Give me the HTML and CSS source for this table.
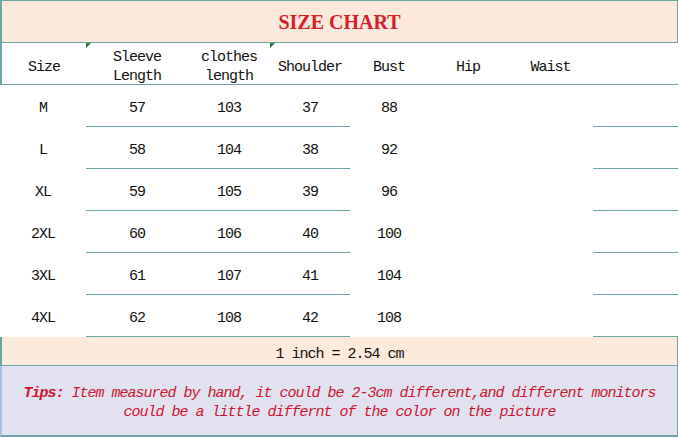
FILE: index.html
```html
<!DOCTYPE html>
<html>
<head>
<meta charset="utf-8">
<link rel="stylesheet" href="styles.css">
</head>
<body>
<div class="chart">
  <div class="title">SIZE CHART</div>
  <div class="row head">
    <div class="cell"><span>Size</span></div>
    <div class="cell mark"><span>Sleeve<br>Length</span></div>
    <div class="cell"><span>clothes<br>length</span></div>
    <div class="cell mark"><span>Shoulder</span></div>
    <div class="cell"><span>Bust</span></div>
    <div class="cell"><span>Hip</span></div>
    <div class="cell"><span>Waist</span></div>
    <div class="cell"></div>
  </div>
  <div class="row data">
    <div class="cell">M</div><div class="cell line">57</div><div class="cell line">103</div><div class="cell line">37</div><div class="cell">88</div><div class="cell"></div><div class="cell"></div><div class="cell line"></div>
  </div>
  <div class="row data">
    <div class="cell">L</div><div class="cell line">58</div><div class="cell line">104</div><div class="cell line">38</div><div class="cell">92</div><div class="cell"></div><div class="cell"></div><div class="cell line"></div>
  </div>
  <div class="row data">
    <div class="cell">XL</div><div class="cell line">59</div><div class="cell line">105</div><div class="cell line">39</div><div class="cell">96</div><div class="cell"></div><div class="cell"></div><div class="cell line"></div>
  </div>
  <div class="row data">
    <div class="cell">2XL</div><div class="cell line">60</div><div class="cell line">106</div><div class="cell line">40</div><div class="cell">100</div><div class="cell"></div><div class="cell"></div><div class="cell line"></div>
  </div>
  <div class="row data">
    <div class="cell">3XL</div><div class="cell line">61</div><div class="cell line">107</div><div class="cell line">41</div><div class="cell">104</div><div class="cell"></div><div class="cell"></div><div class="cell line"></div>
  </div>
  <div class="row data">
    <div class="cell">4XL</div><div class="cell line">62</div><div class="cell line">108</div><div class="cell line">42</div><div class="cell">108</div><div class="cell"></div><div class="cell"></div><div class="cell line"></div>
  </div>
  <div class="footer">1 inch = 2.54 cm</div>
  <div class="tips">
    <p><b>Tips:</b> Item measured by hand, it could be 2-3cm different,and different monitors<br>could be a little differnt of the color on the picture</p>
  </div>
</div>
</body>
</html>
```
FILE: styles.css
```css
html, body {
  margin: 0;
  padding: 0;
  background: #ffffff;
}
.chart {
  width: 678px;
  font-family: "Liberation Mono", "DejaVu Sans Mono", monospace;
  font-size: 15px;
  letter-spacing: -1px;
  color: #111111;
}
.title {
  box-sizing: border-box;
  height: 43px;
  border: 1px solid #6ca4a8;
  border-width: 1px 1px 1px 2px;
  background: #fde8dc;
  color: #d4222b;
  font-family: "Liberation Serif", serif;
  font-weight: bold;
  font-size: 20px;
  letter-spacing: 0;
  display: flex;
  align-items: center;
  justify-content: center;
  padding-top: 2px;
}
.row {
  display: grid;
  grid-template-columns: 86px 102px 82px 80px 78px 80px 85px 85px;
}
.head {
  box-sizing: border-box;
  height: 42px;
  border-bottom: 1px solid #6ca4a8;
  border-left: 2px solid #6ca4a8;
  grid-template-columns: 84px 102px 82px 80px 78px 80px 85px 85px;
}
.head .cell {
  line-height: 19px;
  padding-top: 5px;
}
.cell {
  position: relative;
  display: flex;
  align-items: center;
  justify-content: center;
  text-align: center;
  box-sizing: border-box;
}
.mark::before {
  content: "";
  position: absolute;
  left: 0;
  top: 0;
  width: 0;
  height: 0;
  border-top: 5px solid #1f7a3c;
  border-right: 5px solid transparent;
}
.data {
  height: 42px;
}
.data .cell {
  padding-top: 5px;
}
.line {
  border-bottom: 1px solid #6ca4a8;
}
.footer {
  box-sizing: border-box;
  height: 29px;
  background: #fdeadd;
  border-left: 2px solid #6ca4a8;
  border-right: 1px solid #6ca4a8;
  border-bottom: 1px solid #6ca4a8;
  display: flex;
  align-items: center;
  justify-content: center;
  padding-top: 6px;
}
.tips {
  box-sizing: border-box;
  height: 71px;
  background: #e2e1ef;
  border-left: 2px solid #9cc3e2;
  border-right: 1px solid #6ca4a8;
  border-bottom: 2px solid #6ca4a8;
  display: flex;
  align-items: center;
  justify-content: center;
  padding-top: 4px;
}
.tips p {
  margin: 0;
  text-align: center;
  font-style: italic;
  color: #cf1432;
  line-height: 19px;
}
.tips b {
  font-weight: bold;
}
```
